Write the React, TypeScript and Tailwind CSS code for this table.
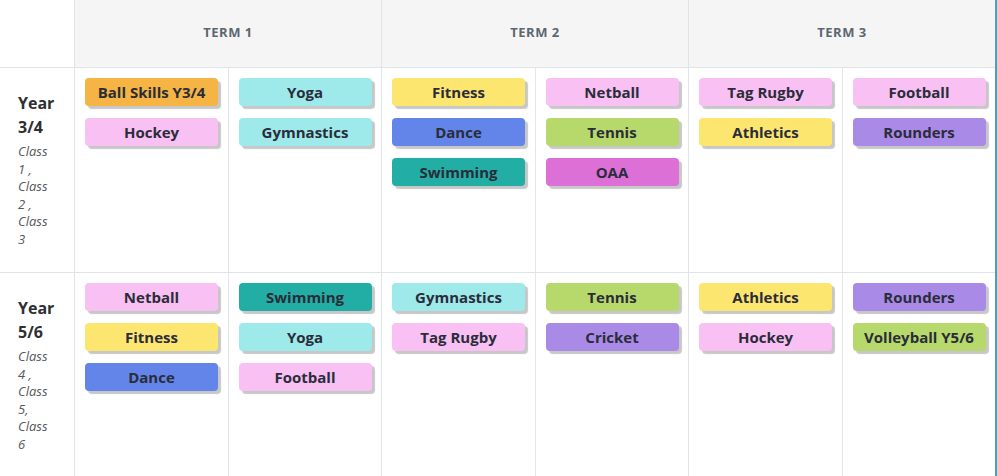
import React from "react";

type Chip = { label: string; color: string };

const C = {
  orange: "bg-[#f5b443]",
  pink: "bg-[#f9c1f3]",
  cyan: "bg-[#9ee9e9]",
  yellow: "bg-[#fde66f]",
  blue: "bg-[#6384e8]",
  teal: "bg-[#22aea5]",
  green: "bg-[#b7d96b]",
  magenta: "bg-[#dc70d7]",
  purple: "bg-[#a98ae6]",
};

const rows: { year: string; classes: string[]; cells: Chip[][] }[] = [
  {
    year: "Year 3/4",
    classes: ["Class", "1 ,", "Class", "2 ,", "Class", "3"],
    cells: [
      [
        { label: "Ball Skills Y3/4", color: C.orange },
        { label: "Hockey", color: C.pink },
      ],
      [
        { label: "Yoga", color: C.cyan },
        { label: "Gymnastics", color: C.cyan },
      ],
      [
        { label: "Fitness", color: C.yellow },
        { label: "Dance", color: C.blue },
        { label: "Swimming", color: C.teal },
      ],
      [
        { label: "Netball", color: C.pink },
        { label: "Tennis", color: C.green },
        { label: "OAA", color: C.magenta },
      ],
      [
        { label: "Tag Rugby", color: C.pink },
        { label: "Athletics", color: C.yellow },
      ],
      [
        { label: "Football", color: C.pink },
        { label: "Rounders", color: C.purple },
      ],
    ],
  },
  {
    year: "Year 5/6",
    classes: ["Class", "4 ,", "Class", "5,", "Class", "6"],
    cells: [
      [
        { label: "Netball", color: C.pink },
        { label: "Fitness", color: C.yellow },
        { label: "Dance", color: C.blue },
      ],
      [
        { label: "Swimming", color: C.teal },
        { label: "Yoga", color: C.cyan },
        { label: "Football", color: C.pink },
      ],
      [
        { label: "Gymnastics", color: C.cyan },
        { label: "Tag Rugby", color: C.pink },
      ],
      [
        { label: "Tennis", color: C.green },
        { label: "Cricket", color: C.purple },
      ],
      [
        { label: "Athletics", color: C.yellow },
        { label: "Hockey", color: C.pink },
      ],
      [
        { label: "Rounders", color: C.purple },
        { label: "Volleyball Y5/6", color: C.green },
      ],
    ],
  },
];

const ChipBox = ({ chip }: { chip: Chip }) => (
  <div
    className={`${chip.color} h-[28px] w-[133px] rounded-[4px] flex items-center justify-center text-[15px] font-bold text-[#2a2c3a] shadow-[3px_3px_1px_rgba(0,0,0,0.22)]`}
  >
    {chip.label}
  </div>
);

const App = () => {
  return (
    <div
      className="w-[997px] h-[476px] overflow-hidden bg-white flex flex-col border-r-2 border-[#5f97ae]"
      style={{ fontFamily: '"Open Sans", "Liberation Sans", sans-serif' }}
    >
      <div className="flex h-[68px] shrink-0 border-b border-[#dfe4e7]">
        <div className="w-[75px] shrink-0 border-r border-[#dfe4e7] bg-white" />
        {["TERM 1", "TERM 2", "TERM 3"].map((t, i) => (
          <div
            key={t}
            className={`flex-1 bg-[#f5f5f5] flex items-center justify-center pb-[2px] text-[13px] font-bold tracking-[0.5px] text-[#5c6770] ${
              i < 2 ? "border-r border-[#dfe4e7]" : ""
            }`}
          >
            {t}
          </div>
        ))}
      </div>
      {rows.map((row, r) => (
        <div
          key={row.year}
          className={`flex shrink-0 ${r == 0 ? "h-[205px] border-b border-[#dfe4e7]" : "flex-1"}`}
        >
          <div className="w-[75px] shrink-0 border-r border-[#dfe4e7] pl-[18px] pt-[23px]">
            <div className="text-[16px] font-bold leading-[24px] text-[#2d2f33]">
              {row.year.split(" ").map((w) => (
                <div key={w}>{w}</div>
              ))}
            </div>
            <div className="text-[13px] italic leading-[17.6px] text-[#55585c] mt-[4px]">
              {row.classes.map((c, i) => (
                <div key={i}>{c}</div>
              ))}
            </div>
          </div>
          {[0, 1, 2].map((t) => (
            <div
              key={t}
              className={`flex-1 flex ${t < 2 ? "border-r border-[#dfe4e7]" : ""}`}
            >
              {[0, 1].map((s) => (
                <div
                  key={s}
                  className={`flex-1 flex flex-col gap-[12px] pl-[10px] pt-[10px] ${
                    s == 0 ? "border-r border-[#e3e7e9]" : ""
                  }`}
                >
                  {row.cells[t * 2 + s].map((chip) => (
                    <ChipBox key={chip.label} chip={chip} />
                  ))}
                </div>
              ))}
            </div>
          ))}
        </div>
      ))}
    </div>
  );
};

export default App;
